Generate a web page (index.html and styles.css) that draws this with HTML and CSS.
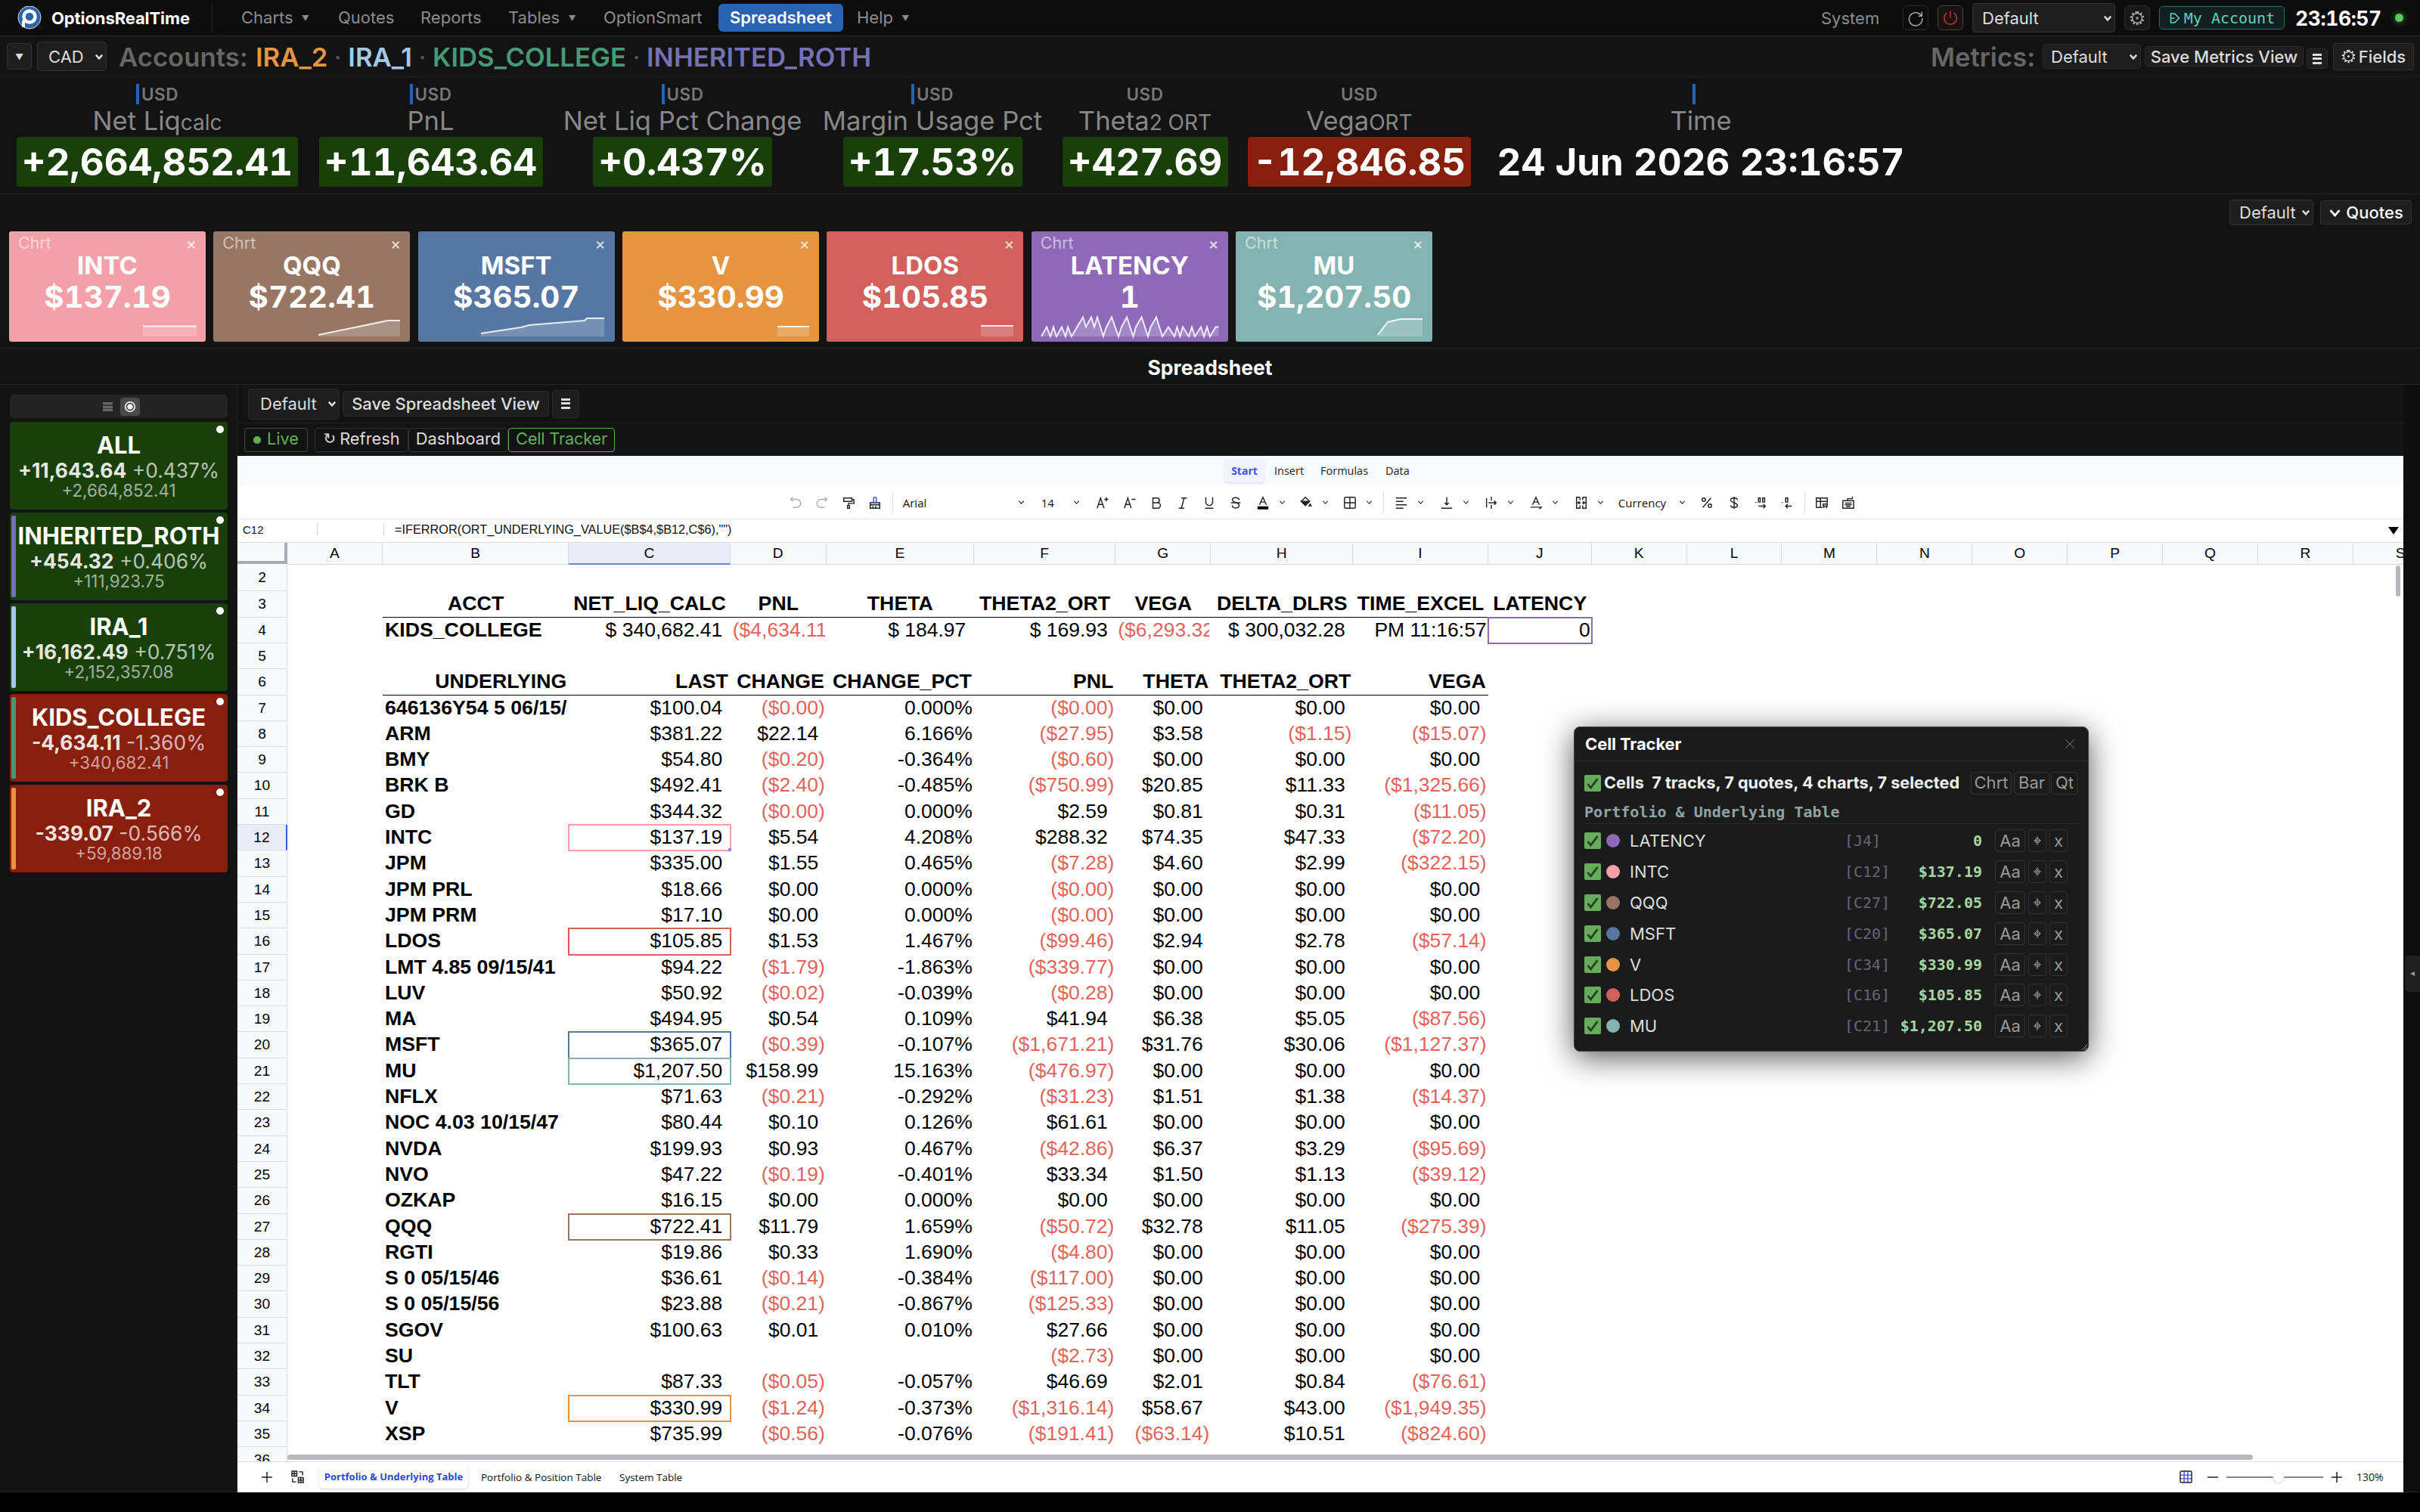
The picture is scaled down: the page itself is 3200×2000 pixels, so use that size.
FILE: index.html
```html
<!DOCTYPE html>
<html lang="en">
<head>
    <meta charset="UTF-8">
    <title>OptionsRealTime</title>
    <link rel="stylesheet" href="styles.css">
</head>
<body>
    <!-- icons -->
    <svg width="0" height="0" class="defs">
        <symbol id="i-undo" viewBox="0 0 20 20"><path d="M6 2 3 5l3 3M3 5h8.500a5.500 5.500 0 0 1 0 12H6"/></symbol>
        <symbol id="i-redo" viewBox="0 0 20 20"><path d="m14 2 3 3-3 3M17 5H8.500a5.500 5.500 0 0 0 0 12H14"/></symbol>
        <symbol id="i-paint" viewBox="0 0 20 20"><path d="M3 3h12v5H3zM15 5.500h3V11h-8v3M8.500 14h3v4h-3z"/></symbol>
        <symbol id="i-clear" viewBox="0 0 20 20"><path d="M3 10h14v8H3zM3 13h14M7 18v-3M11 18v-3"/><path class="blue" d="M8 10V4a2 2 0 0 1 4 0v6"/></symbol>
        <symbol id="i-aplus" viewBox="0 0 20 20"><path d="m2 18 5-15 5 15M4 12.500h6M12.500 5h6M15.500 2v6"/></symbol>
        <symbol id="i-aminus" viewBox="0 0 20 20"><path d="m2 18 5-15 5 15M4 12.500h6M12.500 5h6"/></symbol>
        <symbol id="i-bold" viewBox="0 0 20 20"><path d="M5 3h6a3.500 3.500 0 0 1 0 7H5zM5 10h7a4 4 0 0 1 0 8H5z"/></symbol>
        <symbol id="i-italic" viewBox="0 0 20 20"><path d="M8 3h8M4 18h8M12 3 8 18"/></symbol>
        <symbol id="i-under" viewBox="0 0 20 20"><path d="M5 2v7a5 5 0 0 0 10 0V2M4 18h12"/></symbol>
        <symbol id="i-strike" viewBox="0 0 20 20"><path d="M15 6c0-4-10-5-10-.5C5 10 15 9 15 14s-10 5-10 0M3 10h14"/></symbol>
        <symbol id="i-color" viewBox="0 0 20 20"><path d="m5 13 5-11 5 11M7 9h6"/><path class="fat" d="M2 17.500h16"/></symbol>
        <symbol id="i-fill" viewBox="0 0 20 20"><path d="m9 2 6 6-6 6-6-6z"/><path class="solid" d="M3 8h12l-6 6zM16 12l1.500 2.500h-3z"/></symbol>
        <symbol id="i-border" viewBox="0 0 20 20"><rect x="2" y="2" width="16" height="16" rx="2"/><path d="M10 2v16M2 10h16"/></symbol>
        <symbol id="i-align" viewBox="0 0 20 20"><path d="M2 3h16M2 8h11M2 13h16M2 18h11"/></symbol>
        <symbol id="i-valign" viewBox="0 0 20 20"><path d="M10 2v11M7 10l3 3 3-3M2 18h16"/></symbol>
        <symbol id="i-wrap" viewBox="0 0 20 20"><path d="M3 3v14M10 1v6M10 13v6M6 10h11M14 7l3 3-3 3"/></symbol>
        <symbol id="i-rotate" viewBox="0 0 20 20"><path d="m5 13 5-11 5 11M7 9h6M2 16.500h16l-3 2.500"/></symbol>
        <symbol id="i-merge" viewBox="0 0 20 20"><path d="M8 2H3v16h5v-4M8 2v4M12 2h5v16h-5v-4M12 2v4M3 10h5M17 10h-5M6 8l2 2-2 2M14 8l-2 2 2 2"/></symbol>
        <symbol id="i-pct" viewBox="0 0 20 20"><path d="M16 3 4 17"/><circle cx="5.500" cy="5.500" r="2.500"/><circle cx="14.500" cy="14.500" r="2.500"/></symbol>
        <symbol id="i-usd" viewBox="0 0 20 20"><path d="M15 6c0-4-10-4-10 0s10 4 10 8-10 4-10 0M10 1v18"/></symbol>
        <symbol id="i-decadd" viewBox="0 0 20 20"><path d="M3 9v1M7 3h2.500v6H7zM13 3h3v6h-3zM7 15h10M14 12l3 3-3 3"/></symbol>
        <symbol id="i-decdel" viewBox="0 0 20 20"><path d="M3 9v1M8 3h3v6H8zM17 15H8M11 12l-3 3 3 3"/></symbol>
        <symbol id="i-table" viewBox="0 0 20 20"><path d="M11 17H2V3h16v8M2 8h16M8 3v14M12 12h6v3h-6zM13 15v3M17 15v3"/></symbol>
        <symbol id="i-keys" viewBox="0 0 20 20"><path d="M2 7h16v11H2zM9 7V4h7V1M5 10.500h10M5 13h10M7 15.500h6"/></symbol>
        <symbol id="i-down" viewBox="0 0 10 10"><path d="m1.500 3 3.500 4 3.500-4"/></symbol>
        <symbol id="i-gear" viewBox="0 0 20 20"><circle cx="10" cy="10" r="6.500"/><circle cx="10" cy="10" r="1"/><path stroke-dasharray="2.200 2.510" stroke-width="2.500" d="M10 2a8 8 0 1 1-.01 0"/></symbol>
        <symbol id="i-check" viewBox="0 0 22 22"><rect width="22" height="22" rx="2" fill="#66ad5b" stroke="none"/><path d="m4.500 12 4 5L17.500 5" stroke="#2b3a2a" stroke-width="2.800"/></symbol>
        <symbol id="i-target" viewBox="0 0 12 14"><circle cx="6" cy="7" r="3"/><path d="M6 1v12M1 7h10"/></symbol>
    </svg>

    <header class="top">
        <svg class="logo" viewBox="0 0 32 32"><circle cx="16" cy="15" r="15" fill="#2a63b0"/><path d="M8 28v-9" stroke="#fff" stroke-width="4"/><circle cx="16" cy="14" r="7.500" fill="#2a63b0" stroke="#fff" stroke-width="4.500"/></svg>
        <div class="brand">OptionsRealTime</div>
        <nav class="nav">
            <a class="n1">Charts <i>▼</i></a>
            <a class="n2">Quotes</a>
            <a class="n3">Reports</a>
            <a class="n4">Tables <i>▼</i></a>
            <a class="n5">OptionSmart</a>
            <a class="n6 current">Spreadsheet</a>
            <a class="n7">Help <i>▼</i></a>
        </nav>
        <div class="tools">
            <span class="system">System</span>
            <span class="btn sq"><svg viewBox="0 0 24 24"><path d="M20.500 9A9.500 9.500 0 1 0 21.500 12M21 3v6h-5"/></svg></span>
            <span class="btn sq red"><svg viewBox="0 0 24 24"><path d="M7 4.500a9 9 0 1 0 10 0M12 1.500V12"/></svg></span>
            <span class="btn sel theme">Default<svg><use href="#i-down"/></svg></span>
            <span class="btn sq gear"><svg><use href="#i-gear"/></svg></span>
            <span class="btn account"><svg viewBox="0 0 14 20"><path d="M2 4h5l6 6-6 6H2zM2 10h5"/></svg>My Account</span>
            <span class="clock">23:16:57</span>
            <span class="led"></span>
        </div>
    </header>

    <div class="bar">
        <span class="btn tiny">▼</span>
        <span class="btn sel cur">CAD<svg><use href="#i-down"/></svg></span>
        <div class="accts">
            <span>Accounts:</span>
            <b class="c-orange">IRA_2</b><em>·</em><b class="c-sky">IRA_1</b><em>·</em><b class="c-green">KIDS_COLLEGE</b><em>·</em><b class="c-violet">INHERITED_ROTH</b>
        </div>
        <div class="metrics-tools">
            <span class="metrics-label">Metrics:</span>
            <span class="btn sel mview">Default<svg><use href="#i-down"/></svg></span>
            <span class="btn msave">Save Metrics View</span>
            <span class="btn burger mburger"><i></i></span>
            <span class="btn fields"><svg><use href="#i-gear"/></svg>Fields</span>
        </div>
    </div>

    <section class="metrics">
        <div class="metric"><p class="usd bar-l">USD</p><h3>Net Liq<small>calc</small></h3><b class="up w1">+2,664,852.41</b></div>
        <div class="metric"><p class="usd bar-l">USD</p><h3>PnL</h3><b class="up w2">+11,643.64</b></div>
        <div class="metric"><p class="usd bar-l">USD</p><h3>Net Liq Pct Change</h3><b class="up w3">+0.437%</b></div>
        <div class="metric"><p class="usd bar-l">USD</p><h3>Margin Usage Pct</h3><b class="up w4">+17.53%</b></div>
        <div class="metric"><p class="usd">USD</p><h3>Theta<small>2 ORT</small></h3><b class="up w5">+427.69</b></div>
        <div class="metric"><p class="usd">USD</p><h3>Vega<small>ORT</small></h3><b class="down w6">-12,846.85</b></div>
        <div class="metric"><p class="usd bar-l only"></p><h3>Time</h3><b>24 Jun 2026 23:16:57</b></div>
    </section>

    <section class="quotes">
        <div class="quotes-tools">
            <span class="btn sel qview">Default<svg><use href="#i-down"/></svg></span>
            <span class="btn qbtn"><svg><use href="#i-down"/></svg>Quotes</span>
        </div>
        <div class="cards">
            <div class="card q-pink"><p><span>Chrt</span><i>×</i></p><h4>INTC</h4><b>$137.19</b>
                <svg viewBox="0 0 260 146"><path class="area" d="M177 139V125.500H248V139z"/><path d="M177 125.500H248"/></svg></div>
            <div class="card q-brown"><p><span>Chrt</span><i>×</i></p><h4>QQQ</h4><b>$722.41</b>
                <svg viewBox="0 0 260 146"><path class="area" d="M139 139V137L231 118H247V139z"/><path d="M139 137 231 118H247"/></svg></div>
            <div class="card q-blue"><p><span></span><i>×</i></p><h4>MSFT</h4><b>$365.07</b>
                <svg viewBox="0 0 260 146"><path class="area" d="M83 139V135L136 127 147 124 220 118 223 115H246V139z"/><path d="M83 135 136 127 147 124 220 118 223 115H246"/></svg></div>
            <div class="card q-orange"><p><span></span><i>×</i></p><h4>V</h4><b>$330.99</b>
                <svg viewBox="0 0 260 146"><path class="area" d="M205 139V126H247V139z"/><path d="M205 126H247"/></svg></div>
            <div class="card q-red"><p><span></span><i>×</i></p><h4>LDOS</h4><b>$105.85</b>
                <svg viewBox="0 0 260 146"><path class="area" d="M204 139V125H247V139z"/><path d="M204 125H247"/></svg></div>
            <div class="card q-violet"><p><span>Chrt</span><i>×</i></p><h4>LATENCY</h4><b>1</b>
                <svg viewBox="0 0 260 146"><path class="area" id="latArea"/><path id="latLine"/></svg></div>
            <div class="card q-teal"><p><span>Chrt</span><i>×</i></p><h4>MU</h4><b>$1,207.50</b>
                <svg viewBox="0 0 260 146"><path class="area" d="M188 139V137L201 120 218 116H247V139z"/><path d="M188 137 201 120 218 116H247"/></svg></div>
        </div>
    </section>

    <h2 class="page-title">Spreadsheet</h2>

    <div class="body">
        <aside class="side">
            <div class="toggle">
                <span class="lines"></span>
                <span class="ring"><svg viewBox="0 0 16 16"><circle cx="8" cy="8" r="6.300"/><circle cx="8" cy="8" r="2.800" fill="#fff"/></svg></span>
            </div>
            <div class="acct up"><h5>ALL</h5><p><b>+11,643.64</b> +0.437%</p><small>+2,664,852.41</small></div>
            <div class="acct up s-violet"><h5>INHERITED_ROTH</h5><p><b>+454.32</b> +0.406%</p><small>+111,923.75</small></div>
            <div class="acct up s-sky"><h5>IRA_1</h5><p><b>+16,162.49</b> +0.751%</p><small>+2,152,357.08</small></div>
            <div class="acct down s-green"><h5>KIDS_COLLEGE</h5><p><b>-4,634.11</b> -1.360%</p><small>+340,682.41</small></div>
            <div class="acct down s-orange"><h5>IRA_2</h5><p><b>-339.07</b> -0.566%</p><small>+59,889.18</small></div>
        </aside>

        <main class="main">
            <div class="row1">
                <span class="btn sel sview">Default<svg><use href="#i-down"/></svg></span>
                <span class="btn ssave">Save Spreadsheet View</span>
                <span class="btn burger sburger"><i></i></span>
            </div>
            <div class="row2">
                <span class="btn live"><i></i>Live</span>
                <span class="btn refresh"><u>↻</u>Refresh</span>
                <span class="btn dash">Dashboard</span>
                <span class="btn tracker-btn">Cell Tracker</span>
            </div>

            <div class="sheet">
                <div class="tabs"><a class="on">Start</a><a class="t2">Insert</a><a class="t3">Formulas</a><a class="t4">Data</a></div>
                <div class="ribbon">
                    <span class="ic dim"><svg><use href="#i-undo"/></svg></span>
                    <span class="ic dim"><svg><use href="#i-redo"/></svg></span>
                    <span class="ic"><svg><use href="#i-paint"/></svg></span>
                    <span class="ic"><svg><use href="#i-clear"/></svg></span>
                    <span class="sep"></span>
                    <span class="pick font">Arial<svg class="dn"><use href="#i-down"/></svg></span>
                    <span class="pick size">14<svg class="dn"><use href="#i-down"/></svg></span>
                    <span class="ic"><svg><use href="#i-aplus"/></svg></span>
                    <span class="ic"><svg><use href="#i-aminus"/></svg></span>
                    <span class="ic"><svg><use href="#i-bold"/></svg></span>
                    <span class="ic"><svg><use href="#i-italic"/></svg></span>
                    <span class="ic"><svg><use href="#i-under"/></svg></span>
                    <span class="ic"><svg><use href="#i-strike"/></svg></span>
                    <span class="ic two"><svg><use href="#i-color"/></svg><svg class="dn"><use href="#i-down"/></svg></span>
                    <span class="ic two"><svg><use href="#i-fill"/></svg><svg class="dn"><use href="#i-down"/></svg></span>
                    <span class="ic two"><svg><use href="#i-border"/></svg><svg class="dn"><use href="#i-down"/></svg></span>
                    <span class="sep"></span>
                    <span class="ic two wide"><svg><use href="#i-align"/></svg><svg class="dn"><use href="#i-down"/></svg></span>
                    <span class="ic two wide"><svg><use href="#i-valign"/></svg><svg class="dn"><use href="#i-down"/></svg></span>
                    <span class="ic two wide"><svg><use href="#i-wrap"/></svg><svg class="dn"><use href="#i-down"/></svg></span>
                    <span class="ic two wide"><svg><use href="#i-rotate"/></svg><svg class="dn"><use href="#i-down"/></svg></span>
                    <span class="ic two wide"><svg><use href="#i-merge"/></svg><svg class="dn"><use href="#i-down"/></svg></span>
                    <span class="pick fmt">Currency<svg class="dn"><use href="#i-down"/></svg></span>
                    <span class="ic"><svg><use href="#i-pct"/></svg></span>
                    <span class="ic"><svg><use href="#i-usd"/></svg></span>
                    <span class="ic"><svg><use href="#i-decadd"/></svg></span>
                    <span class="ic"><svg><use href="#i-decdel"/></svg></span>
                    <span class="sep"></span>
                    <span class="ic"><svg><use href="#i-table"/></svg></span>
                    <span class="ic"><svg><use href="#i-keys"/></svg></span>
                </div>
                <div class="fx"><span class="ref">C12</span><span class="fx-btns"></span><span class="formula">=IFERROR(ORT_UNDERLYING_VALUE($B$4,$B12,C$6),"")</span><span class="fx-more"></span></div>

                <div class="grid" id="grid">
                    <i class="vscroll"></i>
                    <i class="hscroll"></i>
                </div>

                <div class="foot">
                    <svg class="plus" viewBox="0 0 16 16"><path d="M8 1v14M1 8h14"/></svg>
                    <svg class="sheets" viewBox="0 0 18 18"><path d="M1 1h7v7H1zM10 10h7v7h-7zM4.500 1v7M1 4.500h7M13.500 10v7M10 13.500h7M11 2h5v5M2 11v5h5"/></svg>
                    <a class="on">Portfolio &amp; Underlying Table</a>
                    <a class="f2">Portfolio &amp; Position Table</a>
                    <a class="f3">System Table</a>
                    <div class="zoom">
                        <svg class="gridicon" viewBox="0 0 18 18"><path class="blue" d="M6.500 1v16M11.500 1v16M1 6.500h16M1 11.500h16"/><rect x="1" y="1" width="16" height="16" rx="2"/></svg>
                        <svg class="minus" viewBox="0 0 16 16"><path d="M1 8h14"/></svg>
                        <span class="slider"><i></i></span>
                        <svg class="plus2" viewBox="0 0 16 16"><path d="M8 1v14M1 8h14"/></svg>
                        <span class="pct">130%</span>
                    </div>
                </div>
            </div>
        </main>
        <div class="edge"><span>◂</span></div>
    </div>

    <div class="tracker">
        <h6>Cell Tracker<svg viewBox="0 0 14 14"><path d="m1 1 12 12M13 1 1 13"/></svg></h6>
        <div class="summary">
            <svg class="chk"><use href="#i-check"/></svg>
            <b>Cells&nbsp; 7 tracks, 7 quotes, 4 charts, 7 selected</b>
            <span class="k1">Chrt</span><span class="k2">Bar</span><span class="k3">Qt</span>
        </div>
        <div class="group">Portfolio &amp; Underlying Table</div>
        <div id="tracks"></div>
        <svg class="grip" viewBox="0 0 8 8"><path d="M0 8 8 0M4 8l4-4"/></svg>
    </div>

    <script>
        var cols = 'ABCDEFGHIJKLMNOPQRS'.split('');
        var rows = {
            3: ['ACCT', 'NET_LIQ_CALC', 'PNL', 'THETA', 'THETA2_ORT', 'VEGA', 'DELTA_DLRS', 'TIME_EXCEL', 'LATENCY'],
            4: ['KIDS_COLLEGE', '$ 340,682.41', '($4,634.11)', '$ 184.97', '$ 169.93', '($6,293.32)', '$ 300,032.28', 'PM 11:16:57', '0'],
            6: ['UNDERLYING', 'LAST', 'CHANGE', 'CHANGE_PCT', 'PNL', 'THETA', 'THETA2_ORT', 'VEGA'],
            7: ['646136Y54 5 06/15/42', '$100.04', '($0.00)', '0.000%', '($0.00)', '$0.00', '$0.00', '$0.00'],
            8: ['ARM', '$381.22', '$22.14', '6.166%', '($27.95)', '$3.58', '($1.15)', '($15.07)'],
            9: ['BMY', '$54.80', '($0.20)', '-0.364%', '($0.60)', '$0.00', '$0.00', '$0.00'],
            10: ['BRK B', '$492.41', '($2.40)', '-0.485%', '($750.99)', '$20.85', '$11.33', '($1,325.66)'],
            11: ['GD', '$344.32', '($0.00)', '0.000%', '$2.59', '$0.81', '$0.31', '($11.05)'],
            12: ['INTC', '$137.19', '$5.54', '4.208%', '$288.32', '$74.35', '$47.33', '($72.20)'],
            13: ['JPM', '$335.00', '$1.55', '0.465%', '($7.28)', '$4.60', '$2.99', '($322.15)'],
            14: ['JPM PRL', '$18.66', '$0.00', '0.000%', '($0.00)', '$0.00', '$0.00', '$0.00'],
            15: ['JPM PRM', '$17.10', '$0.00', '0.000%', '($0.00)', '$0.00', '$0.00', '$0.00'],
            16: ['LDOS', '$105.85', '$1.53', '1.467%', '($99.46)', '$2.94', '$2.78', '($57.14)'],
            17: ['LMT 4.85 09/15/41', '$94.22', '($1.79)', '-1.863%', '($339.77)', '$0.00', '$0.00', '$0.00'],
            18: ['LUV', '$50.92', '($0.02)', '-0.039%', '($0.28)', '$0.00', '$0.00', '$0.00'],
            19: ['MA', '$494.95', '$0.54', '0.109%', '$41.94', '$6.38', '$5.05', '($87.56)'],
            20: ['MSFT', '$365.07', '($0.39)', '-0.107%', '($1,671.21)', '$31.76', '$30.06', '($1,127.37)'],
            21: ['MU', '$1,207.50', '$158.99', '15.163%', '($476.97)', '$0.00', '$0.00', '$0.00'],
            22: ['NFLX', '$71.63', '($0.21)', '-0.292%', '($31.23)', '$1.51', '$1.38', '($14.37)'],
            23: ['NOC 4.03 10/15/47', '$80.44', '$0.10', '0.126%', '$61.61', '$0.00', '$0.00', '$0.00'],
            24: ['NVDA', '$199.93', '$0.93', '0.467%', '($42.86)', '$6.37', '$3.29', '($95.69)'],
            25: ['NVO', '$47.22', '($0.19)', '-0.401%', '$33.34', '$1.50', '$1.13', '($39.12)'],
            26: ['OZKAP', '$16.15', '$0.00', '0.000%', '$0.00', '$0.00', '$0.00', '$0.00'],
            27: ['QQQ', '$722.41', '$11.79', '1.659%', '($50.72)', '$32.78', '$11.05', '($275.39)'],
            28: ['RGTI', '$19.86', '$0.33', '1.690%', '($4.80)', '$0.00', '$0.00', '$0.00'],
            29: ['S 0 05/15/46', '$36.61', '($0.14)', '-0.384%', '($117.00)', '$0.00', '$0.00', '$0.00'],
            30: ['S 0 05/15/56', '$23.88', '($0.21)', '-0.867%', '($125.33)', '$0.00', '$0.00', '$0.00'],
            31: ['SGOV', '$100.63', '$0.01', '0.010%', '$27.66', '$0.00', '$0.00', '$0.00'],
            32: ['SU', '', '', '', '($2.73)', '$0.00', '$0.00', '$0.00'],
            33: ['TLT', '$87.33', '($0.05)', '-0.057%', '$46.69', '$2.01', '$0.84', '($76.61)'],
            34: ['V', '$330.99', '($1.24)', '-0.373%', '($1,316.14)', '$58.67', '$43.00', '($1,949.35)'],
            35: ['XSP', '$735.99', '($0.56)', '-0.076%', '($191.41)', '($63.14)', '$10.51', '($824.60)']
        };
        // tracked cells, cell id -> border class
        var marks = { J4: 'm-violet', C12: 'm-pink', C16: 'm-red', C20: 'm-blue', C21: 'm-teal', C27: 'm-brown', C34: 'm-orange' };

        var html = '<div class="tr head"><span class="num corner"></span>';
        cols.forEach(function (c) {
            html += '<span' + (c === 'C' ? ' class="on"' : '') + '>' + c + '</span>';
        });
        html += '</div>';
        for (var r = 2; r <= 36; r++) {
            html += '<div class="tr r' + r + '"><span class="num' + (r === 12 ? ' on' : '') + '">' + r + '</span><span></span>';
            (rows[r] || []).forEach(function (v, i) {
                var cls = [];
                if (i === 0 || r === 3 || r === 6) cls.push('bold');
                if (i === 0 && r !== 3 && r !== 6) cls.push('left');
                if (r === 3) cls.push('center');
                if (v.charAt(0) === '(') cls.push('neg');
                if (v.charAt(0) === '$') cls.push('pos');
                if (r === 4 && v.charAt(0) === '(') cls.push('left');
                if ((r === 3 || r === 6) && i < 8) cls.push('line');
                if (marks[cols[i + 1] + r]) cls.push('mark', marks[cols[i + 1] + r]);
                html += '<span class="' + cls.join(' ') + '">' + v + '</span>';
            });
            html += '</div>';
        }
        document.getElementById('grid').insertAdjacentHTML('afterbegin', html);

        // tracker list
        var tracks = [
            ['violet', 'LATENCY', 'J4', '0'],
            ['pink', 'INTC', 'C12', '$137.19'],
            ['brown', 'QQQ', 'C27', '$722.05'],
            ['blue', 'MSFT', 'C20', '$365.07'],
            ['orange', 'V', 'C34', '$330.99'],
            ['red', 'LDOS', 'C16', '$105.85'],
            ['teal', 'MU', 'C21', '$1,207.50']
        ];
        document.getElementById('tracks').innerHTML = tracks.map(function (t) {
            return '<div class="track"><svg class="chk"><use href="#i-check"/></svg><i class="dot q-' + t[0] + '"></i>' +
                '<span class="name">' + t[1] + '</span><span class="cell">[' + t[2] + ']</span><span class="val">' + t[3] + '</span>' +
                '<span class="a1">Aa</span><span class="a2"><svg><use href="#i-target"/></svg></span><span class="a3">x</span></div>';
        }).join('');

        // latency sparkline, level 0..2
        var lat = [[13, 0], [20, 1], [25, 0], [29, 1], [33, 0], [40, 1], [45, 0], [48, 1], [53, 0], [68, 2], [72, 1], [79, 2],
            [83, 1], [87, 2], [95, 0], [99, 1], [106, 2], [115, 0], [119, 1], [126, 2], [134.5, 0], [138, 1], [145.5, 2],
            [154, 0], [157.5, 1], [165, 2], [173, 0], [181, 1], [189, 0], [192.5, 1], [196.5, 0], [200, 1], [208, 0], [212, 1],
            [216, 0], [224, 1], [228, 0], [232, 1], [236, 0], [243.5, 1], [247.5, 1]];
        var line = 'M' + lat.map(function (p) { return p[0] + ' ' + [139, 126.5, 113.5][p[1]]; }).join('L');
        document.getElementById('latLine').setAttribute('d', line);
        document.getElementById('latArea').setAttribute('d', line + 'V139H13z');
    </script>
</body>
</html>
```
FILE: styles.css
```css
* {
    box-sizing: border-box;
    margin: 0;
    padding: 0;
}
body {
    width: 3200px;
    height: 2000px;
    overflow: hidden;
    background: #000;
    color: #ddd;
    font-family: Inter, sans-serif;
    font-size: 22px;
    position: relative;
}
i, em, u {
    font-style: normal;
    text-decoration: none;
}
svg {
    fill: none;
    stroke: currentColor;
    flex: none;
}
.defs {
    position: absolute;
}
.btn {
    display: flex;
    align-items: center;
    justify-content: center;
    flex: none;
    background: #1e1e1e;
    border: 1px solid #333;
    border-radius: 4px;
    white-space: nowrap;
}
.btn svg {
    width: 12px;
    height: 12px;
    stroke-width: 2;
}
.sel {
    justify-content: space-between;
    padding: 0 3px 0 12px;
}

/* header */
.top {
    height: 48px;
    background: #0d0d0d;
    border-bottom: 1px solid #2a2a2a;
    display: flex;
    align-items: center;
    padding-left: 23px;
}
.logo {
    width: 32px;
    height: 32px;
}
.brand {
    width: 226px;
    height: 40px;
    line-height: 40px;
    padding-left: 13px;
    border-right: 1px solid #2a2a2a;
    color: #fff;
    font-weight: 700;
    font-size: 22px;
    letter-spacing: -.1px;
}
.nav {
    display: flex;
    align-items: center;
    color: #8c8c8c;
    line-height: 37px;
    white-space: nowrap;
}
.nav i {
    font-size: 10px;
    margin-left: 5px;
    vertical-align: 3px;
}
.n1 { width: 166px; padding-left: 38px; }
.n2 { width: 109px; }
.n3 { width: 116px; }
.n4 { width: 126px; }
.n5 { width: 152px; }
.n6 { width: 165px; }
.n7 { padding-left: 18px; }
.nav .current {
    background: #2862b0;
    border-radius: 6px;
    color: #fff;
    text-align: center;
    font-weight: 600;
}
.tools {
    margin-left: auto;
    display: flex;
    align-items: center;
}
.system {
    width: 108px;
    color: #8c8c8c;
}
.btn.sq {
    width: 34px;
    height: 33px;
    margin-right: 12px;
    background: #0d0d0d;
    border-color: #2c2c2c;
    border-radius: 6px;
    color: #aaa;
}
.btn.sq svg {
    width: 22px;
    height: 22px;
    stroke-width: 1.6;
}
.btn.red { color: #c0392b; background: #1a1212; border-color: #444; }
.btn.sq.gear { background: #191919; }
.btn.sq.gear svg { width: 20px; height: 20px; stroke-width: 1.4; }
.theme {
    width: 189px;
    height: 39px;
    margin-right: 12px;
}
.account {
    width: 166px;
    height: 31px;
    background: #14201f;
    border-color: #2b6d63;
    border-radius: 5px;
    color: #5fd3be;
    font: 20px "DejaVu Sans Mono", monospace;
}
.btn.account svg {
    width: 15px;
    height: 20px;
    margin-right: 5px;
    stroke-width: 1.6;
}
.clock {
    width: 146px;
    padding-left: 14px;
    color: #fff;
    font-weight: 700;
    font-size: 26.5px;
    font-variant-numeric: tabular-nums;
    letter-spacing: -.4px;
}
.led {
    width: 11px;
    height: 11px;
    margin-right: 22px;
    border-radius: 50%;
    background: #5cc85c;
    box-shadow: 0 0 8px #3c8a3c;
}

/* accounts bar */
.bar {
    height: 54px;
    background: #131313;
    border-bottom: 1px solid #1e1e1e;
    display: flex;
    align-items: center;
    padding: 0 8px 0 9px;
}
.tiny {
    width: 33px;
    height: 35px;
    font-size: 11px;
}
.cur {
    width: 92px;
    height: 39px;
    margin: 0 16px 0 7px;
    padding-left: 14px;
}
.accts {
    display: flex;
    font-size: 34.7px;
    font-weight: 600;
}
.accts span {
    width: 181px;
    color: #666;
}
.accts em {
    width: 27px;
    text-align: center;
    font-weight: 400;
    color: #555;
}
.accts b { font-weight: 600; }
.c-orange { color: #e5943f; }
.c-sky { color: #a5c8e8; }
.c-green { color: #459a77; }
.c-violet { color: #7770b3; }
.metrics-tools {
    margin-left: auto;
    display: flex;
    align-items: center;
}
.metrics-label {
    width: 148px;
    font-size: 34.7px;
    font-weight: 600;
    color: #666;
}
.mview { width: 130px; height: 33px; padding-left: 10px; margin-right: 5px; border-color: #2a2a2a; }
.msave { width: 210px; height: 27px; margin-right: 4px; border-color: #2a2a2a; font-weight: 500; }
.burger { border-color: #2a2a2a; }
.burger i {
    width: 12px;
    height: 14px;
    background: linear-gradient(#ddd 3px, transparent 3px 5px, #ddd 5px 8px, transparent 8px 11px, #ddd 11px);
}
.mburger { width: 28px; height: 27px; margin: 6px 7px 0 0; }
.fields { width: 107px; height: 36px; font-weight: 500; }
.btn.fields svg { width: 19px; height: 19px; margin-right: 4px; stroke-width: 1.4; }

/* metrics */
.metrics {
    height: 155px;
    background: #131313;
    border-bottom: 1px solid #262626;
    display: grid;
    grid-template-columns: 400px 323px 343px 318px 244px 323px 580px;
    padding: 9px 8px 0;
}
.metric {
    display: flex;
    flex-direction: column;
    align-items: center;
}
.usd {
    height: 27px;
    line-height: 28px;
    font-size: 22.5px;
    font-weight: 600;
    letter-spacing: .5px;
    color: #777;
}
.bar-l {
    border-left: 4px solid #2862b0;
    padding-left: 3px;
}
.only { padding-left: 18px; }
.metric h3 {
    height: 43px;
    line-height: 43px;
    font-size: 34.6px;
    font-weight: 400;
    color: #888;
    white-space: nowrap;
}
.metric small { font-size: 28px; }
.metric b {
    height: 66px;
    line-height: 66px;
    border-radius: 4px;
    font-size: 49.3px;
    font-weight: 700;
    font-variant-numeric: tabular-nums;
    color: #fff;
    text-align: center;
    white-space: nowrap;
}
.up { background: #1a400a; }
.down { background: #881e0c; }
.w1 { width: 372px; }
.w2 { width: 296px; }
.w3 { width: 237px; }
.w4 { width: 237px; }
.w5 { width: 219px; }
.w6 { width: 295px; }

/* quotes */
.quotes {
    height: 204px;
    background: #131313;
    border-bottom: 1px solid #262626;
}
.quotes-tools {
    height: 49px;
    padding: 0 11px 1px;
    display: flex;
    justify-content: flex-end;
    align-items: center;
}
.qview { width: 111px; height: 34px; margin-right: 9px; }
.qbtn { width: 121px; height: 32px; color: #fff; font-weight: 500; }
.btn.qbtn svg { width: 17px; height: 17px; margin-right: 6px; stroke-width: 1.6; }
.cards {
    display: flex;
    gap: 10.35px;
    padding-left: 12px;
}
.card {
    width: 260px;
    height: 146px;
    position: relative;
    border-radius: 3px;
    color: #fff;
    text-align: center;
}
.card p {
    height: 28px;
    padding: 2px 12px 0;
    display: flex;
    justify-content: space-between;
    line-height: 26px;
    font-size: 21.5px;
}
.card p span { opacity: .55; }
.card p i { opacity: .8; line-height: 28px; }
.card h4 {
    line-height: 34px;
    font-size: 33px;
    font-weight: 700;
}
.card b {
    display: block;
    line-height: 50px;
    font-size: 40.3px;
    font-variant-numeric: tabular-nums;
}
.card svg {
    position: absolute;
    left: 0;
    top: 0;
    stroke: rgba(255, 255, 255, .85);
    stroke-width: 2;
}
.area {
    fill: rgba(255, 255, 255, .2);
    stroke: none;
}
.q-pink { background: #f3a0a8; }
.q-brown { background: #977663; }
.q-blue { background: #5676a3; }
.q-orange { background: #e5943f; }
.q-red { background: #d2605c; }
.q-violet { background: #8e69b8; }
.q-teal { background: #84b4b1; }

.page-title {
    height: 48px;
    line-height: 50px;
    background: #131313;
    border-bottom: 1px solid #262626;
    text-align: center;
    font-size: 26.5px;
    font-weight: 700;
    color: #fff;
}

/* sidebar */
.body {
    height: 1465px;
    display: flex;
    background: #131313;
    border-bottom: 1px solid #262626;
}
.side {
    width: 314px;
    border-right: 1px solid #222;
    padding: 13px 13px 0;
}
.toggle {
    height: 31px;
    margin: 0 -1px 5px 0;
    padding-left: 6px;
    border-radius: 5px;
    background: #242424;
    display: flex;
    align-items: center;
    justify-content: center;
    gap: 10px;
}
.lines {
    width: 13px;
    height: 12px;
    background: repeating-linear-gradient(#666 0 3px, #3a3a3a 3px 4.500px);
}
.ring {
    width: 26px;
    height: 24px;
    border-radius: 4px;
    background: #4a4a4a;
    color: #fff;
    display: flex;
    align-items: center;
    justify-content: center;
}
.ring svg { width: 16px; height: 16px; stroke-width: 1.6; }
.acct {
    position: relative;
    height: 116px;
    margin: 0 -1px 4px 0;
    padding-top: 11px;
    border-radius: 4px;
    text-align: center;
    color: #fff;
    white-space: nowrap;
}
.acct h5 {
    font-size: 31px;
    line-height: 40px;
    font-weight: 700;
}
.acct p {
    margin-top: -1px;
    font-size: 26.4px;
    line-height: 29px;
    color: rgba(255, 255, 255, .7);
}
.acct p b { color: rgba(255, 255, 255, .9); }
.acct small {
    display: block;
    margin-top: -1px;
    font-size: 22.3px;
    line-height: 26px;
    color: rgba(255, 255, 255, .6);
}
.acct::before {
    content: "";
    position: absolute;
    left: 2px;
    top: 4px;
    width: 6px;
    height: 108px;
    border-radius: 2px;
}
.acct::after {
    content: "";
    position: absolute;
    right: 5px;
    top: 5px;
    width: 10px;
    height: 10px;
    border-radius: 50%;
    background: #fff;
}
.s-violet::before { background: #7770b3; }
.s-sky::before { background: #a5c8e8; }
.s-green::before { background: #459a77; }
.s-orange::before { background: #e5943f; }

/* main area */
.main { width: 2864px; }
.row1 {
    height: 51px;
    border-bottom: 1px solid #222;
    display: flex;
    align-items: center;
    padding-left: 14px;
}
.sview { width: 121px; height: 41px; margin-right: 4px; padding-left: 15px; border-color: #2a2a2a; }
.ssave { width: 273px; height: 34px; margin-right: 4px; border-color: #2a2a2a; font-weight: 500; }
.sburger { width: 36px; height: 37px; }
.row2 {
    height: 43px;
    display: flex;
    align-items: center;
    padding-left: 9px;
    font-size: 21.8px;
}
.row2 .btn {
    height: 32px;
    padding-bottom: 3px;
    background: #131313;
}
.row2 .live {
    width: 84px;
    margin-right: 9px;
    border-color: #2f5a2c;
    color: #60b054;
}
.live i {
    width: 10px;
    height: 10px;
    border-radius: 50%;
    background: #60b054;
    margin: 3px 8px 0 0;
}
.refresh { width: 124px; }
.refresh u { font-family: "DejaVu Sans", sans-serif; font-size: 20px; margin-right: 5px; }
.dash { width: 132px; }
.row2 .tracker-btn { width: 141px; border-color: #60b054; color: #60b054; letter-spacing: -.2px; }

.sheet {
    height: 1371px;
    background: #fff;
    color: #222;
    font-family: "Open Sans", sans-serif;
    font-size: 14.5px;
    display: flex;
    flex-direction: column;
}
.tabs {
    height: 40px;
    background: #f9fafc;
    display: flex;
    align-items: center;
    padding: 0 0 2px 1305px;
}
.tabs a, .foot a { white-space: nowrap; }
.tabs .on {
    width: 53px;
    height: 31px;
    line-height: 31px;
    margin-right: 13px;
    text-align: center;
    border-radius: 4px;
    background: #f2f4fd;
    box-shadow: 0 1px 2px #d8dae4;
    color: #3a50e8;
    font-weight: 700;
    font-size: 14px;
}
.t2 { width: 61px; }
.t3 { width: 86px; }
.ribbon {
    height: 44px;
    border-bottom: 1px solid #dfe0e8;
    display: flex;
    align-items: center;
    padding-left: 720px;
}
.ic {
    width: 35.2px;
    height: 30px;
    flex: none;
    display: flex;
    align-items: center;
    justify-content: center;
    color: #1f2329;
}
.ic svg {
    width: 18px;
    height: 18px;
    stroke-width: 1.6;
}
.dim { color: #a9adc0; }
.two {
    width: 57.5px;
    justify-content: flex-start;
    padding-left: 9px;
}
.wide { width: 59.3px; }
svg.dn, .ic svg.dn {
    width: 9px;
    height: 9px;
    stroke-width: 1.2;
}
.two svg.dn { margin-left: 12px; }
.blue { stroke: #3a50e8; }
.fat { stroke: #000; stroke-width: 4.5; }
.solid { fill: currentColor; }
.sep {
    width: 1px;
    height: 27px;
    margin: 0 5px;
    background: #dcdde4;
    flex: none;
}
.pick {
    display: flex;
    align-items: center;
    justify-content: space-between;
    flex: none;
    color: #111;
    font-size: 15px;
}
.font { width: 161px; margin-left: 8px; margin-right: 22px; }
.size { width: 51px; margin-right: 13px; }
.fmt { width: 89px; margin: 0 11px 0 8px; }
.fx {
    height: 31px;
    border-bottom: 1px solid #dfe0e5;
    display: flex;
    align-items: center;
    padding: 0 0 3px 7px;
    font-size: 15px;
    font-family: "Liberation Sans", Arial, sans-serif;
    color: #111;
}
.ref { width: 99px; height: 17px; line-height: 17px; border-right: 1px solid #d8d9e0; }
.fx-btns { width: 88px; height: 17px; border-right: 1px solid #d8d9e0; }
.formula { padding-left: 14px; font-size: 16.3px; }
.fx-more {
    margin: 3px 6px 0 auto;
    border: 7px solid transparent;
    border-top: 10px solid #000;
    border-bottom: 0;
}

/* cells */
.grid {
    flex: 1;
    position: relative;
    overflow: hidden;
    font-family: "Liberation Sans", Arial, sans-serif;
    font-size: 26.5px;
    color: #000;
}
.tr {
    height: 34.3px;
    display: grid;
    grid-template-columns: 66px 126px 246.300px 213.500px 127px 195px 187.500px 126px 188px 178.400px 137px repeat(9, 125.900px);
}
.tr > span {
    position: relative;
    height: 34.3px;
    line-height: 33px;
    padding-right: 2px;
    text-align: right;
    white-space: nowrap;
    overflow: hidden;
}
.tr > .num {
    background: #f8f9fb;
    border-right: 1px solid #d9dade;
    border-bottom: 1px solid #dcdde1;
    line-height: 34px;
    padding: 0;
    text-align: center;
    font-size: 19.2px;
}
.head { height: 29.4px; }
.head > span {
    height: 29.4px;
    line-height: 28px;
    padding: 0;
    background: #f8f9fb;
    border-right: 1px solid #d6d7dc;
    border-bottom: 1px solid #d6d7dc;
    text-align: center;
    font-size: 19.2px;
}
.head > .on {
    background: #e9ebf7;
    border-bottom: 2px solid #6d80e0;
}
.head > .corner {
    height: 28.4px;
    border-right: 4px solid #a5acb9;
    border-bottom: 4px solid #a5acb9;
}
.r2, .r2 > span { height: 35px; }
.tr > .num.on {
    background: #e9ebf7;
    border-right: 2px solid #3a55d8;
}
.tr > .bold { font-weight: 700; font-size: 26.7px; padding-right: 3px; }
.tr > .left { text-align: left; padding-left: 3px; border-right: 2px solid transparent; }
.tr > .center { text-align: center; padding-right: 0; }
.tr > .neg { color: #e2635a; }
.tr > .pos { padding-right: 10.5px; }
.tr > .line { border-bottom: 1.5px solid #000; }
.tr > .mark {
    overflow: visible;
    outline: 2px solid;
    outline-offset: -1px;
    z-index: 1;
}
.m-violet { outline-color: #8e69b8 !important; }
.m-pink { outline-color: #f3a0a8 !important; }
.m-red { outline-color: #d2605c !important; }
.m-blue { outline-color: #5676a3 !important; }
.m-teal { outline-color: #84b4b1 !important; }
.m-brown { outline-color: #977663 !important; }
.m-orange { outline-color: #e5943f !important; }
.m-pink::after {
    content: "";
    position: absolute;
    right: -1px;
    bottom: -1px;
    width: 4px;
    height: 4px;
    background: #8f8be0;
}
.vscroll {
    position: absolute;
    right: 4px;
    top: 30px;
    width: 6px;
    height: 41px;
    border-radius: 3px;
    background: #b6b8bd;
}
.hscroll {
    position: absolute;
    left: 66px;
    bottom: 2px;
    width: 2599px;
    height: 7px;
    border-radius: 4px;
    background: #b6b8bd;
}
.foot {
    height: 41px;
    border-top: 1px solid #dfe0e5;
    display: flex;
    align-items: center;
    padding: 0 0 1px 31px;
}
.foot svg {
    width: 16px;
    height: 16px;
    stroke-width: 1.5;
}
.foot .sheets { width: 17px; height: 17px; margin: 0 20px 0 24px; }
.foot .on {
    width: 197px;
    height: 31px;
    line-height: 30px;
    border-radius: 5px;
    box-shadow: 0 1px 3px #cfd0d6;
    text-align: center;
    color: #2f45dc;
    font-weight: 700;
    font-size: 13px;
}
.foot .f2, .foot .f3 { font-size: 13.5px; padding-left: 17px; color: #111; }
.foot .f2 { width: 183px; }
.zoom {
    margin-left: auto;
    display: flex;
    align-items: center;
}
.foot .gridicon { width: 17px; height: 17px; margin-right: 19px; }
.slider {
    position: relative;
    width: 128px;
    height: 2px;
    margin: 0 10px;
    background: #7b8597;
}
.slider i {
    position: absolute;
    left: 62px;
    top: -7px;
    width: 14px;
    height: 15px;
    border-radius: 50%;
    background: #fff;
    box-shadow: 0 1px 3px #ccc;
}
.pct {
    width: 80px;
    padding-left: 18px;
    font-size: 14px;
}
.edge {
    width: 22px;
    background: #0e0e0e;
    display: flex;
    align-items: center;
    justify-content: flex-end;
    padding-top: 94px;
}
.edge span {
    width: 20px;
    height: 48px;
    line-height: 46px;
    border-radius: 5px 0 0 5px;
    background: #202020;
    color: #999;
    font-size: 12px;
    text-align: center;
}

/* floating window */
.tracker {
    position: absolute;
    left: 2081px;
    top: 961px;
    width: 681px;
    height: 430px;
    background: #1b1b1b;
    border: 1px solid #444;
    border-radius: 8px;
    box-shadow: 0 8px 40px rgba(0, 0, 0, .65);
    z-index: 5;
}
.tracker h6 {
    height: 45px;
    border-bottom: 1px solid #2c2c2c;
    display: flex;
    align-items: center;
    justify-content: space-between;
    padding: 0 17px 0 14px;
    font-size: 22px;
    font-weight: 700;
    letter-spacing: -.1px;
    color: #fff;
}
.tracker h6 svg { width: 14px; height: 14px; color: #777; }
.chk { width: 22px; height: 22px; }
.summary {
    height: 58px;
    padding: 0 13px 1px;
    display: flex;
    align-items: center;
    color: #eee;
    font-size: 22px;
    white-space: nowrap;
}
.summary b {
    width: 484px;
    padding: 0 0 1px 4px;
    font-weight: 700;
    font-size: 21.7px;
}
.summary span, .a1, .a2, .a3 {
    height: 30px;
    margin-left: 4px;
    border: 1px solid #333;
    border-radius: 4px;
    display: flex;
    align-items: center;
    justify-content: center;
    color: #999;
    flex: none;
}
.summary span { padding-bottom: 2px; }
.summary .k1 { width: 54px; margin-left: 5px; }
.summary .k2 { width: 47px; margin-left: 3px; }
.summary .k3 { width: 36px; margin-left: 2px; }
.group {
    height: 25px;
    margin: 0 13px 2px;
    border-bottom: 1px solid #282828;
    color: #8fa3a3;
    font: 600 20.05px/18px "DejaVu Sans Mono", monospace;
}
.track {
    height: 40.8px;
    padding-left: 13px;
    display: flex;
    align-items: center;
    color: #ddd;
}
.dot {
    width: 18px;
    height: 18px;
    margin: 0 13px 0 7px;
    border-radius: 50%;
}
.name { width: 284px; }
.cell, .val {
    font-family: "DejaVu Sans Mono", monospace;
    font-size: 20px;
}
.cell { width: 70px; color: #686478; }
.val { width: 112px; margin-right: 13px; text-align: right; color: #a5d6a0; font-weight: 700; }
.a1 { width: 40px; }
.a2 { width: 24px; }
.a2 svg { width: 12px; height: 14px; }
.a3 { width: 24px; }
.grip {
    position: absolute;
    right: 1px;
    bottom: 1px;
    width: 7px;
    height: 7px;
    color: #aaa;
}
```
